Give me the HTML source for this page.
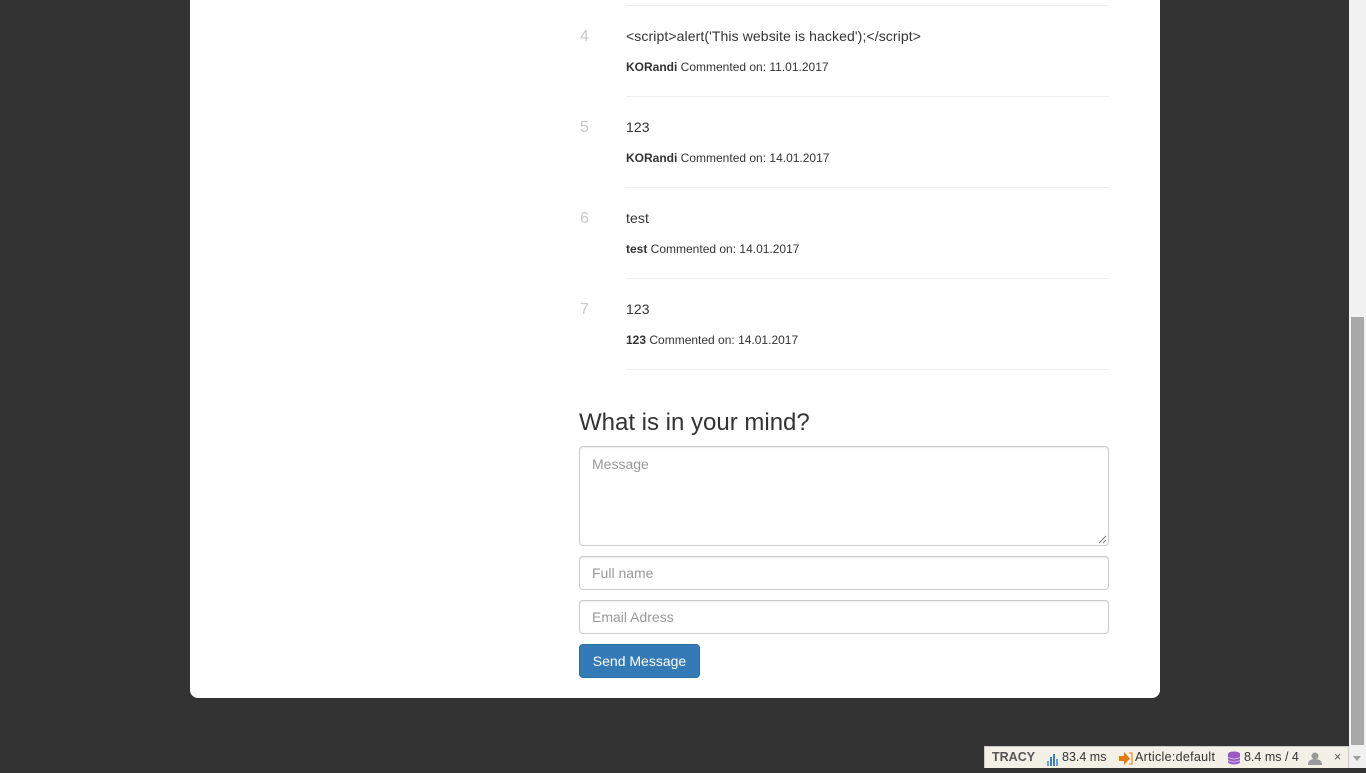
<!DOCTYPE html>
<html><head><meta charset="utf-8"><style>
*{box-sizing:border-box;margin:0;padding:0}
html,body{width:1366px;height:768px;overflow:hidden;background:#333;font-family:"Liberation Sans",Arial,sans-serif;color:#333}
.card{position:absolute;left:190px;top:-10px;width:970px;height:708px;background:#fff;border-radius:0 0 8px 8px}
.sep{position:absolute;left:626px;width:483px;height:1px;background:#eee}
.num{position:absolute;left:580px;font-size:16px;color:#c8c8c8;line-height:18px}
.txt{position:absolute;left:626px;font-size:14px;line-height:18px;color:#333;letter-spacing:0.1px}
.meta{position:absolute;left:626px;font-size:12px;line-height:14px;color:#333}
.meta b{font-weight:bold}
h2{position:absolute;left:579px;top:408px;font-size:24px;font-weight:normal;line-height:30px;color:#333}
.inp{position:absolute;left:579px;width:530px;border:1px solid #ccc;border-radius:4px;background:#fff;font-size:14px;color:#999;padding:0 12px;box-shadow:inset 0 1px 1px rgba(0,0,0,.075)}
.btn{position:absolute;left:579px;top:644px;width:121px;height:34px;background:#337ab7;border:1px solid #2e6da4;border-radius:4px;color:#fff;font-size:14px;line-height:32px;text-align:center}
.sb{position:absolute;left:1349px;top:0;width:17px;height:768px;background:#f1f1f1}
.thumb{position:absolute;left:1351px;top:317px;width:13px;height:428px;background:#a8a8a8}
.tracy{position:absolute;left:984px;top:746px;width:365px;height:22px;background:#f3f1e6;border:1px solid #c9c9c9;border-bottom:0;font-size:12.5px;color:#333;line-height:21px;white-space:nowrap}
.tracy span{position:absolute;top:0}
</style></head><body>
<div class="card"></div>
<div class="sep" style="top:5px"></div>
<div class="num" style="top:28px">4</div>
<div class="txt" style="top:27px">&lt;script&gt;alert('This website is hacked');&lt;/script&gt;</div>
<div class="meta" style="top:60px"><b>KORandi</b> Commented on: 11.01.2017</div>
<div class="sep" style="top:96px"></div>
<div class="num" style="top:119px">5</div>
<div class="txt" style="top:118px">123</div>
<div class="meta" style="top:151px"><b>KORandi</b> Commented on: 14.01.2017</div>
<div class="sep" style="top:187px"></div>
<div class="num" style="top:210px">6</div>
<div class="txt" style="top:209px">test</div>
<div class="meta" style="top:242px"><b>test</b> Commented on: 14.01.2017</div>
<div class="sep" style="top:278px"></div>
<div class="num" style="top:301px">7</div>
<div class="txt" style="top:300px">123</div>
<div class="meta" style="top:333px"><b>123</b> Commented on: 14.01.2017</div>
<div class="sep" style="top:369px"></div>
<h2>What is in your mind?</h2>
<div class="inp" style="top:446px;height:100px;padding-top:8px;line-height:18px">Message</div>
<svg style="position:absolute;left:1098px;top:535px" width="9" height="9"><path d="M8 1L1 8M8 5L5 8" stroke="#777" stroke-width="1"/></svg>
<div class="inp" style="top:556px;height:34px;line-height:32px">Full name</div>
<div class="inp" style="top:600px;height:34px;line-height:32px">Email Adress</div>
<div class="btn">Send Message</div>
<div class="sb"></div><div class="thumb"></div>
<div style="position:absolute;left:1353px;top:756px;width:0;height:0;border-left:4px solid transparent;border-right:4px solid transparent;border-top:5px solid #a0a0a0"></div>
<div class="tracy">
<span style="left:7px;font-weight:bold;color:#555">TRACY</span>
<span style="left:62px;top:5px"><svg width="12" height="12"><rect x="0" y="7" width="2" height="5" fill="#6aa0d8"/><rect x="3" y="3" width="2" height="9" fill="#3b7fc4"/><rect x="6" y="0" width="2" height="12" fill="#3b7fc4"/><rect x="9" y="5" width="2" height="7" fill="#6aa0d8"/></svg></span>
<span style="left:77px">83.4 ms</span>
<span style="left:134px;top:4px"><svg width="14" height="13"><path d="M0 4h5V0l6 6.5-6 6.5V9H0z" fill="#e07d10"/><path d="M10 1h3v11h-3" fill="none" stroke="#e07d10"/></svg></span>
<span style="left:150px;letter-spacing:0.3px">Article:default</span>
<span style="left:243px;top:4px"><svg width="12" height="14"><ellipse cx="6" cy="3" rx="6" ry="2.5" fill="#9b59c6"/><rect x="0" y="3" width="12" height="8" fill="#9b59c6"/><ellipse cx="6" cy="11" rx="6" ry="2.5" fill="#9b59c6"/><path d="M0 6.5q6 3 12 0M0 9.5q6 3 12 0" stroke="#d6b8ea" fill="none"/></svg></span>
<span style="left:259px">8.4 ms / 4</span>
<span style="left:323px;top:4px"><svg width="14" height="13"><circle cx="7" cy="4" r="3.5" fill="#999"/><path d="M0 13q0-6 7-6t7 6z" fill="#999"/></svg></span>
<span style="left:349px;color:#555">×</span>
</div>
</body></html>
